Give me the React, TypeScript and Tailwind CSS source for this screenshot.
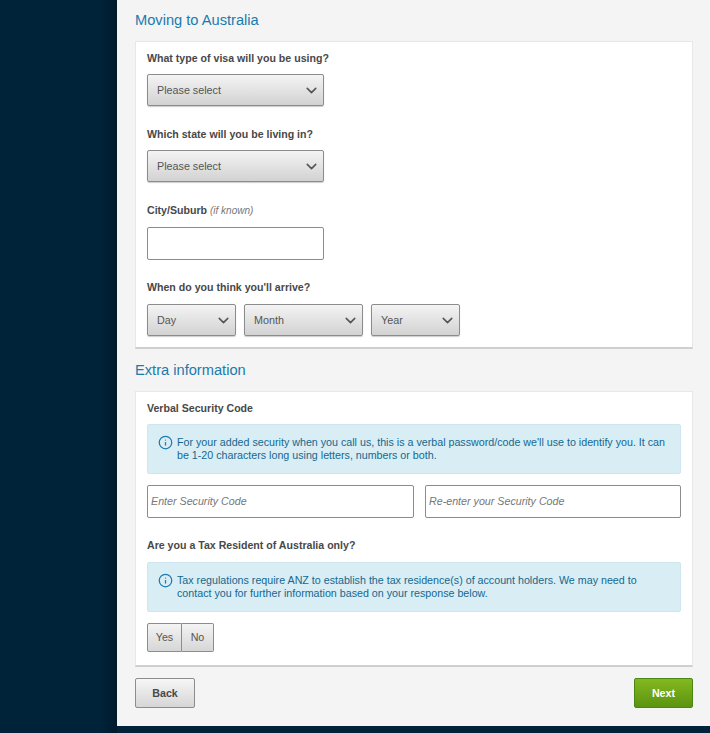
import { ChevronDown, Info } from 'lucide-react'

const selectClass =
    'flex h-[32px] items-center justify-between rounded-[2px] border border-[#8c8c8c] bg-gradient-to-b from-[#f4f4f4] to-[#d2d2d2] pl-[9px] pr-[3px] text-[10.75px] text-[#555] shadow-[0_1px_1px_rgba(0,0,0,0.2)]'

function Select({ label, width }: { label: string; width: string }) {
    return (
        <div className={`${selectClass} ${width}`}>
            <span>{label}</span>
            <ChevronDown className="h-[17px] w-[17px] text-[#555]" strokeWidth={2.2} />
        </div>
    )
}

function FieldLabel({ children }: { children: React.ReactNode }) {
    return <div className="text-[10.6px] font-bold leading-[14px] text-[#484848]">{children}</div>
}

function InfoBox({ children }: { children: React.ReactNode }) {
    return (
        <div className="flex h-[50px] gap-[4px] rounded-[2px] border border-[#cfe6ef] bg-[#d9edf5] pl-[10px] pr-[10px] pt-[11px] text-[10.7px] leading-[13px] text-[#14688f]">
            <Info className="mt-[-1px] h-[15px] w-[15px] shrink-0 text-[#1a7bad]" strokeWidth={2} />
            <p>{children}</p>
        </div>
    )
}

export default function App() {
    return (
        <div className="flex h-[733px] overflow-hidden bg-[#00233a] font-['Liberation_Sans',Arial,sans-serif]">
            <div className="w-[117px] shrink-0 bg-gradient-to-r from-[#00233a] from-[85%] to-[#001a2c]"></div>

            <main className="h-[726px] flex-1 bg-[#f4f4f4] pl-[18px] pr-[17px]">
                <h2 className="pt-[10px] text-[14.65px] leading-[20px] text-[#1a7bad]">Moving to Australia</h2>

                <section className="mt-[11px] h-[308px] border border-b-2 border-[#e8e8e8] border-b-[#cfcfcf] bg-white pl-[11px] pt-[9px]">
                    <FieldLabel>What type of visa will you be using?</FieldLabel>
                    <Select label="Please select" width="mt-[9px] w-[177px]" />

                    <div className="mt-[21px]">
                        <FieldLabel>Which state will you be living in?</FieldLabel>
                    </div>
                    <Select label="Please select" width="mt-[9px] w-[177px]" />

                    <div className="mt-[21px]">
                        <FieldLabel>
                            City/Suburb <span className="text-[10px] font-normal italic text-[#777]">(if known)</span>
                        </FieldLabel>
                    </div>
                    <div className="mt-[9px] h-[33px] w-[177px] rounded-[2px] border border-[#8c8c8c] bg-white"></div>

                    <div className="mt-[20px]">
                        <FieldLabel>When do you think you'll arrive?</FieldLabel>
                    </div>
                    <div className="mt-[10px] flex gap-[8px]">
                        <Select label="Day" width="w-[89px]" />
                        <Select label="Month" width="w-[119px]" />
                        <Select label="Year" width="w-[89px]" />
                    </div>
                </section>

                <h2 className="mt-[11px] text-[14.65px] leading-[20px] text-[#1a7bad]">Extra information</h2>

                <section className="mt-[11px] h-[276px] border border-b-2 border-[#e8e8e8] border-b-[#cfcfcf] bg-white px-[11px] pt-[9px]">
                    <FieldLabel>Verbal Security Code</FieldLabel>
                    <div className="mt-[9px]">
                        <InfoBox>
                            For your added security when you call us, this is a verbal password/code we'll use to identify you. It can be 1-20 characters long using letters, numbers or both.
                        </InfoBox>
                    </div>
                    <div className="mt-[11px] flex gap-[11px]">
                        <div className="flex h-[33px] w-[267px] items-center rounded-[2px] border border-[#8c8c8c] bg-white pl-[3px] text-[10.7px] italic text-[#777]">
                            Enter Security Code
                        </div>
                        <div className="flex h-[33px] flex-1 items-center rounded-[2px] border border-[#8c8c8c] bg-white pl-[3px] text-[10.7px] italic text-[#777]">
                            Re-enter your Security Code
                        </div>
                    </div>

                    <div className="mt-[20px]">
                        <FieldLabel>Are you a Tax Resident of Australia only?</FieldLabel>
                    </div>
                    <div className="mt-[10px]">
                        <InfoBox>
                            Tax regulations require ANZ to establish the tax residence(s) of account holders. We may need to contact you for further information based on your response below.
                        </InfoBox>
                    </div>
                    <div className="mt-[11px] flex">
                        <div className="flex h-[29px] w-[35px] items-center justify-center rounded-l-[2px] border border-[#8c8c8c] bg-gradient-to-b from-[#f4f4f4] to-[#d6d6d6] text-[10.7px] text-[#555]">
                            Yes
                        </div>
                        <div className="flex h-[29px] w-[32px] items-center justify-center rounded-r-[2px] border border-l-0 border-[#8c8c8c] bg-gradient-to-b from-[#f4f4f4] to-[#d6d6d6] text-[10.7px] text-[#555]">
                            No
                        </div>
                    </div>
                </section>

                <div className="mt-[11px] flex justify-between">
                    <div className="flex h-[30px] w-[60px] items-center justify-center rounded-[2px] border border-[#8c8c8c] bg-gradient-to-b from-[#f6f6f6] to-[#d6d6d6] text-[10.7px] font-bold text-[#484848]">
                        Back
                    </div>
                    <div className="flex h-[30px] w-[59px] items-center justify-center rounded-[2px] border border-[#4a8615] bg-gradient-to-b from-[#85b81f] to-[#5a9410] text-[10.7px] font-bold text-white">
                        Next
                    </div>
                </div>
            </main>
        </div>
    )
}
